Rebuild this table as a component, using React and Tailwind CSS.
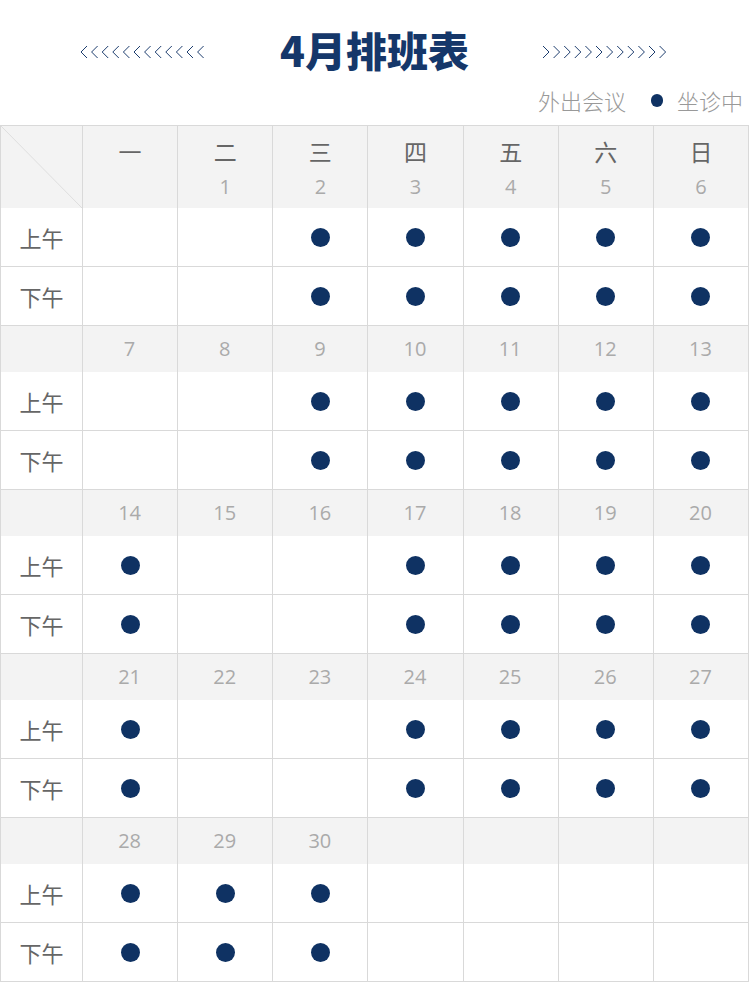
import React from "react";

const CJK = "font-['Noto_Sans_CJK_SC',sans-serif]";
const NUM = "font-['Open_Sans','Noto_Sans_CJK_SC',sans-serif]";

const weekdays = ["一", "二", "三", "四", "五", "六", "日"];

// each week: day numbers + which columns have a dot (am / pm identical here)
const weeks = [
  { days: [null, 1, 2, 3, 4, 5, 6], on: [2, 3, 4, 5, 6] },
  { days: [7, 8, 9, 10, 11, 12, 13], on: [2, 3, 4, 5, 6] },
  { days: [14, 15, 16, 17, 18, 19, 20], on: [0, 3, 4, 5, 6] },
  { days: [21, 22, 23, 24, 25, 26, 27], on: [0, 3, 4, 5, 6] },
  { days: [28, 29, 30, null, null, null, null], on: [0, 1, 2] },
];

function Chevrons({ dir }) {
  const items = Array.from({ length: 12 }, (_, i) => i * 10.6 + 1);
  return (
    <svg width="127" height="14" viewBox="0 0 127 14" className="block">
      {items.map((x) => (
        <polyline
          key={x}
          points={
            dir === "left"
              ? `${x + 6},1 ${x},7 ${x + 6},13`
              : `${x},1 ${x + 6},7 ${x},13`
          }
          fill="none"
          stroke="#1d3d6e"
          strokeWidth="1"
        />
      ))}
    </svg>
  );
}

function Dot() {
  return <span className="block w-[19px] h-[19px] rounded-full bg-[#0f3263]" />;
}

function SlotRow({ label, on }) {
  return (
    <div className="grid grid-cols-[82px_repeat(7,minmax(0,1fr))] h-[59px] bg-white">
      <div className={`flex items-center justify-center border-r border-b border-[#d9d9d9] text-[22px] text-[#666] ${CJK}`}>
        {label}
      </div>
      {weekdays.map((_, i) => (
        <div
          key={i}
          className="flex items-center justify-center pt-[1px] border-r border-b border-[#d9d9d9]"
        >
          {on.includes(i) && <Dot />}
        </div>
      ))}
    </div>
  );
}

export default function App() {
  return (
    <div className="w-[749px] bg-white min-h-[1000px]">
      {/* title */}
      <div className="flex items-center justify-center pt-[28px] h-[76px]">
        <Chevrons dir="left" />
        <h1
          className={`mx-[73px] mb-[6px] text-[41px] leading-none font-black text-[#15376a] ${CJK}`}
        >
          4月排班表
        </h1>
        <Chevrons dir="right" />
      </div>

      {/* legend */}
      <div className={`flex items-center justify-end h-[49px] pr-[6px] text-[22px] font-light text-[#999] ${CJK}`}>
        <span>外出会议</span>
        <span className="ml-[25px] mr-[14px] w-[12px] h-[13px] rounded-full bg-[#0f3263]" />
        <span>坐诊中</span>
      </div>

      {/* schedule table */}
      <div className="border-t border-l border-[#d9d9d9]">
        {weeks.map((w, wi) => (
          <div key={wi}>
            {wi === 0 ? (
              <div className="grid grid-cols-[82px_repeat(7,minmax(0,1fr))] h-[82px] bg-[#f3f3f3]">
                <div className="relative border-r border-[#d9d9d9] overflow-hidden">
                  <svg className="absolute inset-0 w-full h-full" viewBox="0 0 81 82" preserveAspectRatio="none">
                    <line x1="0" y1="0" x2="81" y2="82" stroke="#dedede" strokeWidth="1" />
                  </svg>
                </div>
                {weekdays.map((d, i) => (
                  <div
                    key={d}
                    className="flex flex-col items-center justify-start pt-[11px] border-r border-[#d9d9d9]"
                  >
                    <span className={`text-[23px] leading-[28px] text-[#666] ${CJK}`}>{d}</span>
                    <span className={`mt-[10px] text-[20px] leading-[24px] text-[#aaa] ${NUM}`}>
                      {w.days[i] ?? ""}
                    </span>
                  </div>
                ))}
              </div>
            ) : (
              <div className="grid grid-cols-[82px_repeat(7,minmax(0,1fr))] h-[46px] bg-[#f3f3f3]">
                <div className="border-r border-[#d9d9d9]" />
                {w.days.map((n, i) => (
                  <div
                    key={i}
                    className={`flex items-center justify-center pr-[1px] border-r border-[#d9d9d9] text-[20px] text-[#aaa] ${NUM}`}
                  >
                    {n ?? ""}
                  </div>
                ))}
              </div>
            )}
            <SlotRow label="上午" on={w.on} />
            <SlotRow label="下午" on={w.on} />
          </div>
        ))}
      </div>
    </div>
  );
}
